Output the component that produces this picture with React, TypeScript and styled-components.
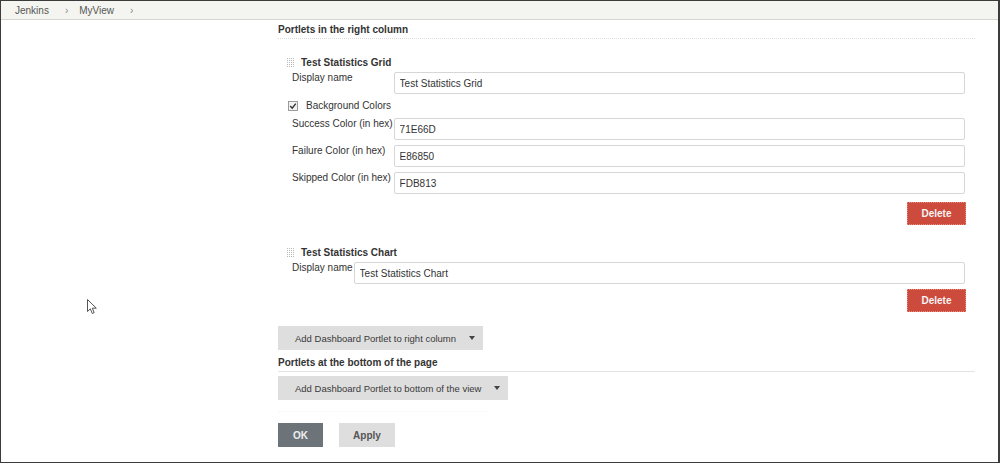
import styled, { createGlobalStyle } from 'styled-components';

const GlobalStyle = createGlobalStyle`
  html, body {
    margin: 0;
    padding: 0;
    background: #ffffff;
  }
  body {
    font-family: "Liberation Sans", Arial, sans-serif;
    font-size: 10px;
    color: #333333;
  }
`;

// 전체 프레임 (스크린샷 테두리)
const Frame = styled.div`
  position: relative;
  width: 1000px;
  height: 463px;
  box-sizing: border-box;
  border: 1px solid #3c3c3c;
  border-right-width: 2px;
  display: flex;
  flex-direction: column;
  overflow: hidden;
  background: #ffffff;
`;

// 상단 breadcrumb
const Breadcrumb = styled.div`
  height: 18px;
  flex-shrink: 0;
  display: flex;
  align-items: center;
  padding-left: 14px;
  background: #f4f5f0;
  border-bottom: 1px solid #d4d4d0;
  color: #555555;
  font-size: 10px;
`;
const Crumb = styled.span`
  margin-right: 16px;
`;
const CrumbArrow = styled.span`
  font-size: 10px;
  color: #888888;
  margin-right: 11px;
`;

const Body = styled.div`
  flex: 1;
  display: flex;
`;
const Sidebar = styled.div`
  position: relative;
  width: 277px;
  flex-shrink: 0;
`;
const Cursor = styled.svg`
  position: absolute;
  left: 86px;
  top: 279px;
`;

const Main = styled.div`
  flex: 1;
  padding-right: 23px;
  display: flex;
  flex-direction: column;
  align-items: flex-start;
`;

const SectionHeader = styled.div<{ $solid?: boolean; $top: number }>`
  align-self: stretch;
  margin-top: ${(p) => p.$top}px;
  font-weight: bold;
  font-size: 10px;
  line-height: 14px;
  color: #333333;
  padding-bottom: 1px;
  border-bottom: 1px ${(p) => (p.$solid ? 'solid #e4e4e4' : 'dotted #dcdcdc')};
`;

// 포틀릿 카드
const Portlet = styled.div<{ $top: number }>`
  align-self: stretch;
  margin-top: ${(p) => p.$top}px;
  padding-left: 9px;
  padding-right: 10px;
`;
const PortletTitle = styled.div`
  display: flex;
  align-items: center;
  gap: 6px;
  font-weight: bold;
  line-height: 14px;
  color: #333333;
`;
const FieldGrid = styled.div`
  display: grid;
  grid-template-columns: auto 1fr;
  row-gap: 5px;
  margin-top: 2px;
  margin-left: 5px;
`;
const Label = styled.div`
  line-height: 12px;
  padding-right: 1px;
  white-space: nowrap;
  color: #333333;
`;
const TextInput = styled.input`
  height: 22px;
  box-sizing: border-box;
  border: 1px solid #d6d6d6;
  border-radius: 2px;
  padding: 0 5px;
  font-family: "Liberation Sans", Arial, sans-serif;
  font-size: 10px;
  color: #333333;
  background: #ffffff;
  outline: none;
  width: 100%;
`;
const CheckRow = styled.div`
  grid-column: 1 / -1;
  display: flex;
  align-items: center;
  gap: 8px;
  margin-left: -4px;
  line-height: 14px;
  color: #333333;
`;

const ActionRow = styled.div<{ $top: number }>`
  display: flex;
  justify-content: flex-end;
  margin-top: ${(p) => p.$top}px;
  margin-right: -1px;
`;
const DeleteButton = styled.button`
  width: 59px;
  height: 23px;
  border: 1px dotted #e58b80;
  background: #cd4b3c;
  color: #f4f4f4;
  font-family: "Liberation Sans", Arial, sans-serif;
  font-size: 10px;
  font-weight: bold;
  padding: 0;
`;

const AddButton = styled.button<{ $top: number }>`
  margin-top: ${(p) => p.$top}px;
  height: 24px;
  display: flex;
  align-items: center;
  gap: 13px;
  padding: 0 8px 0 17px;
  border: none;
  background: #dedede;
  color: #3a3a3a;
  font-family: "Liberation Sans", Arial, sans-serif;
  font-size: 9.5px;
`;
const Caret = styled.span`
  width: 0;
  height: 0;
  border-left: 3px solid transparent;
  border-right: 3px solid transparent;
  border-top: 4px solid #444444;
`;

const FaintRule = styled.div`
  margin-top: 11px;
  width: 212px;
  border-top: 1px dotted #f6f6f6;
`;

const FormButtons = styled.div`
  display: flex;
  gap: 16px;
  margin-top: 11px;
`;
const FormButton = styled.button<{ $primary?: boolean }>`
  height: 24px;
  width: ${(p) => (p.$primary ? 45 : 56)}px;
  border: none;
  padding: 0;
  background: ${(p) => (p.$primary ? '#6c747a' : '#dedede')};
  color: ${(p) => (p.$primary ? '#eeeeee' : '#555555')};
  font-family: "Liberation Sans", Arial, sans-serif;
  font-size: 10px;
  font-weight: bold;
`;

const DragHandle = () => (
  <svg width="8" height="10" viewBox="0 0 8 10">
    {[0, 1, 2, 3, 4].map((r) =>
      [0, 1, 2, 3].map((c) => (
        <rect key={`${r}-${c}`} x={c * 2} y={r * 2} width="1" height="1" fill="#b8b8b8" />
      ))
    )}
  </svg>
);

const CheckBox = () => (
  <svg width="10" height="10" viewBox="0 0 10 10">
    <rect x="0.5" y="0.5" width="9" height="9" fill="#f2f2f2" stroke="#9a9a9a" />
    <path d="M2.2 5 L4.2 7.2 L7.8 2.6" fill="none" stroke="#333" strokeWidth="1.4" />
  </svg>
);

const App = () => {
  return (
    <>
      <GlobalStyle />
      <Frame>
        <Breadcrumb>
          <Crumb>Jenkins</Crumb>
          <CrumbArrow>›</CrumbArrow>
          <Crumb>MyView</Crumb>
          <CrumbArrow>›</CrumbArrow>
        </Breadcrumb>
        <Body>
          <Sidebar>
            <Cursor width="11" height="16" viewBox="0 0 11 16">
              <path
                d="M0.5 0.5 L0.5 12.5 L3.3 9.8 L5.3 14.5 L7.2 13.7 L5.3 9.2 L9.3 9.2 Z"
                fill="#ffffff"
                stroke="#555555"
                strokeWidth="1"
              />
            </Cursor>
          </Sidebar>
          <Main>
            <SectionHeader $top={3}>Portlets in the right column</SectionHeader>

            <Portlet $top={17}>
              <PortletTitle>
                <DragHandle />
                Test Statistics Grid
              </PortletTitle>
              <FieldGrid>
                <Label>Display name</Label>
                <TextInput readOnly value="Test Statistics Grid" />
                <CheckRow>
                  <CheckBox />
                  Background Colors
                </CheckRow>
                <Label>Success Color (in hex)</Label>
                <TextInput readOnly value="71E66D" />
                <Label>Failure Color (in hex)</Label>
                <TextInput readOnly value="E86850" />
                <Label>Skipped Color (in hex)</Label>
                <TextInput readOnly value="FDB813" />
              </FieldGrid>
              <ActionRow $top={8}>
                <DeleteButton>Delete</DeleteButton>
              </ActionRow>
            </Portlet>

            <Portlet $top={21}>
              <PortletTitle>
                <DragHandle />
                Test Statistics Chart
              </PortletTitle>
              <FieldGrid>
                <Label>Display name</Label>
                <TextInput readOnly value="Test Statistics Chart" />
              </FieldGrid>
              <ActionRow $top={5}>
                <DeleteButton>Delete</DeleteButton>
              </ActionRow>
            </Portlet>

            <AddButton $top={14}>
              Add Dashboard Portlet to right column
              <Caret />
            </AddButton>

            <SectionHeader $solid $top={6}>
              Portlets at the bottom of the page
            </SectionHeader>

            <AddButton $top={4}>
              Add Dashboard Portlet to bottom of the view
              <Caret />
            </AddButton>

            <FaintRule />

            <FormButtons>
              <FormButton $primary>OK</FormButton>
              <FormButton>Apply</FormButton>
            </FormButtons>
          </Main>
        </Body>
      </Frame>
    </>
  );
};

export default App;
